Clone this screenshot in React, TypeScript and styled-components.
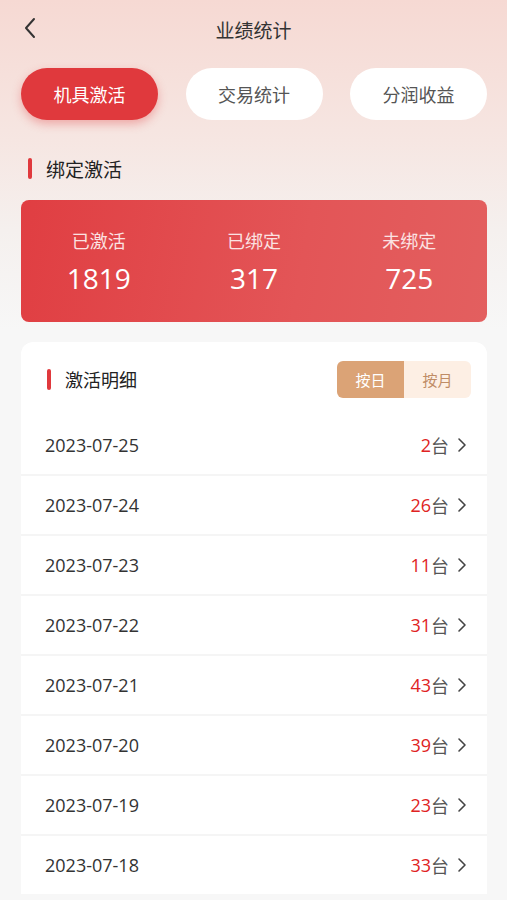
import React from 'react';
import styled, { createGlobalStyle } from 'styled-components';

interface DayRecord {
  date: string;
  count: number;
}

const records: DayRecord[] = [
  { date: '2023-07-25', count: 2 },
  { date: '2023-07-24', count: 26 },
  { date: '2023-07-23', count: 11 },
  { date: '2023-07-22', count: 31 },
  { date: '2023-07-21', count: 43 },
  { date: '2023-07-20', count: 39 },
  { date: '2023-07-19', count: 23 },
  { date: '2023-07-18', count: 33 },
];

const stats = [
  { label: '已激活', value: 1819 },
  { label: '已绑定', value: 317 },
  { label: '未绑定', value: 725 },
];

const tabs = ['机具激活', '交易统计', '分润收益'];

const GlobalStyle = createGlobalStyle`
  html, body {
    margin: 0;
    padding: 0;
    background: #f7f7f7;
  }
  body {
    font-family: 'Noto Sans CJK SC', 'Noto Sans', sans-serif;
  }
  * { box-sizing: border-box; }
`;

const Page = styled.div`
  width: 507px;
  height: 900px;
  overflow: hidden;
  background: linear-gradient(180deg, #f6d9d3 0px, #f6e6e2 140px, #f5f0ee 230px, #f7f7f7 330px);
  display: flex;
  flex-direction: column;

  & > * {
    flex-shrink: 0;
  }
`;

const NavBar = styled.div`
  height: 58px;
  display: flex;
  align-items: center;
  justify-content: center;
  position: relative;
`;

const BackButton = styled.div`
  position: absolute;
  left: 20px;
  top: 16px;
  width: 20px;
  height: 24px;
  display: flex;
  align-items: center;
  justify-content: center;
`;

const NavTitle = styled.div`
  font-size: 19px;
  color: #333;
  margin-top: 1px;
`;

const TabRow = styled.div`
  display: flex;
  justify-content: space-between;
  padding: 10px 20px 0 21px;
`;

const Tab = styled.div<{ $active?: boolean }>`
  width: 137px;
  height: 52px;
  border-radius: 26px;
  display: flex;
  align-items: center;
  justify-content: center;
  font-size: 18px;
  color: ${(p) => (p.$active ? '#fff' : '#555')};
  background: ${(p) => (p.$active ? '#e0393d' : '#fff')};
  box-shadow: ${(p) => (p.$active ? '0 4px 10px rgba(224, 57, 61, 0.35)' : 'none')};
`;

const SectionTitle = styled.div`
  display: flex;
  align-items: center;
  gap: 14px;
  padding: 16px 0 0 28px;
  font-size: 19px;
  color: #222;
  height: 80px;
`;

const Bar = styled.span`
  width: 4px;
  height: 21px;
  border-radius: 2px;
  background: #e0393d;
`;

const StatCard = styled.div`
  margin: 0 20px 0 21px;
  height: 122px;
  border-radius: 8px;
  background: linear-gradient(100deg, #e03e42 0%, #e35557 60%, #e35f5f 100%);
  display: grid;
  grid-template-columns: repeat(3, 1fr);
  align-items: center;
`;

const Stat = styled.div`
  display: flex;
  flex-direction: column;
  align-items: center;
  gap: 8px;
  padding-top: 0;
`;

const StatLabel = styled.div`
  font-size: 18px;
  color: #fbe2e2;
`;

const StatValue = styled.div`
  font-family: 'Open Sans', 'Noto Sans', sans-serif;
  font-size: 28px;
  color: #fff;
  line-height: 34px;
`;

const DetailCard = styled.div`
  margin: 20px 20px 0 21px;
  background: #f5f5f5;
  border-radius: 12px 12px 0 0;
  display: flex;
  flex-direction: column;
  gap: 2px;
`;

const DetailHeader = styled.div`
  height: 74px;
  background: #fff;
  border-radius: 12px 12px 0 0;
  display: flex;
  align-items: center;
  justify-content: space-between;
  padding: 0 16px 0 26px;
  margin-bottom: -2px;
`;

const DetailTitle = styled.div`
  display: flex;
  align-items: center;
  gap: 14px;
  font-size: 18px;
  color: #222;
`;

const Toggle = styled.div`
  display: flex;
  height: 37px;
  border-radius: 6px;
  overflow: hidden;
`;

const ToggleItem = styled.div<{ $active?: boolean }>`
  width: 67px;
  display: flex;
  align-items: center;
  justify-content: center;
  font-size: 15px;
  color: ${(p) => (p.$active ? '#fff' : '#c08c66')};
  background: ${(p) => (p.$active ? '#dba376' : '#fdefe4')};
`;

const Row = styled.div`
  height: 58px;
  background: #fff;
  display: flex;
  align-items: center;
  justify-content: space-between;
  padding: 0 20px 0 24px;
`;

const DateText = styled.div`
  font-family: 'Open Sans', 'Noto Sans', sans-serif;
  font-size: 18px;
  color: #333;
`;

const Amount = styled.div`
  display: flex;
  align-items: center;
  font-size: 18px;
  color: #555;
`;

const Count = styled.span`
  font-family: 'Open Sans', 'Noto Sans', sans-serif;
  color: #e02323;
`;

const Chevron = styled.svg`
  margin-left: 8px;
`;

export default function App() {
  return (
    <>
      <GlobalStyle />
      <Page>
        <NavBar>
          <BackButton>
            <svg width="14" height="22" viewBox="0 0 14 22" fill="none">
              <path d="M11 2 L3 11 L11 20" stroke="#333" strokeWidth="2" strokeLinecap="round" strokeLinejoin="round" />
            </svg>
          </BackButton>
          <NavTitle>业绩统计</NavTitle>
        </NavBar>

        <TabRow>
          {tabs.map((t, i) => (
            <Tab key={t} $active={i === 0}>
              {t}
            </Tab>
          ))}
        </TabRow>

        <SectionTitle>
          <Bar />
          绑定激活
        </SectionTitle>

        <StatCard>
          {stats.map((s) => (
            <Stat key={s.label}>
              <StatLabel>{s.label}</StatLabel>
              <StatValue>{s.value}</StatValue>
            </Stat>
          ))}
        </StatCard>

        <DetailCard>
          <DetailHeader>
            <DetailTitle>
              <Bar />
              激活明细
            </DetailTitle>
            <Toggle>
              <ToggleItem $active>按日</ToggleItem>
              <ToggleItem>按月</ToggleItem>
            </Toggle>
          </DetailHeader>
          {records.map((r) => (
            <Row key={r.date}>
              <DateText>{r.date}</DateText>
              <Amount>
                <Count>{r.count}</Count>台
                <Chevron width="10" height="16" viewBox="0 0 10 16" fill="none">
                  <path d="M2 2 L8 8 L2 14" stroke="#444" strokeWidth="1.6" strokeLinecap="round" strokeLinejoin="round" />
                </Chevron>
              </Amount>
            </Row>
          ))}
        </DetailCard>
      </Page>
    </>
  );
}
